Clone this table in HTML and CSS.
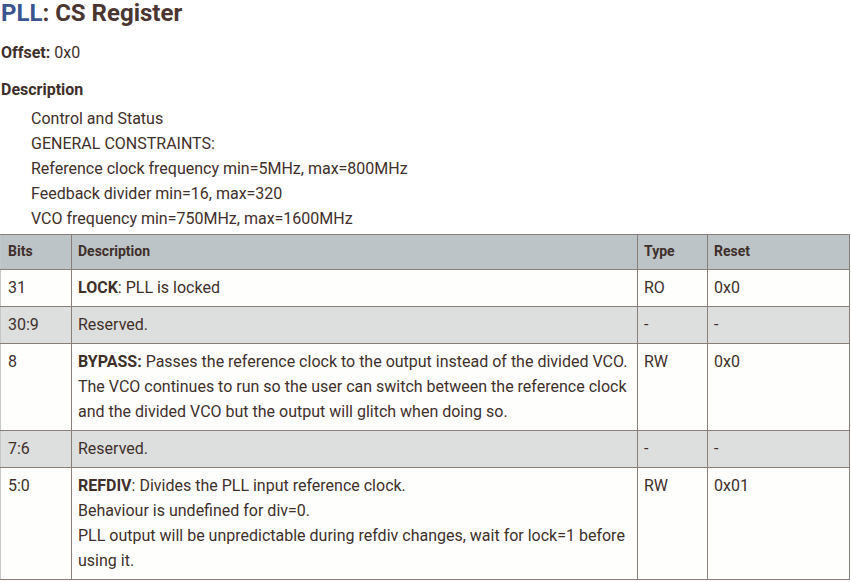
FILE: index.html
```html
<!DOCTYPE html>
<html>
<head>
<meta charset="utf-8">
<link rel="stylesheet" href="styles.css">
</head>
<body>
<div class="page">
  <h1 class="title"><span class="title-block">PLL</span>: CS Register</h1>
  <p class="offset"><b>Offset:</b> 0x0</p>
  <h4 class="desc-head">Description</h4>
  <div class="desc">
    <div>Control and Status</div>
    <div>GENERAL CONSTRAINTS:</div>
    <div>Reference clock frequency min=5MHz, max=800MHz</div>
    <div>Feedback divider min=16, max=320</div>
    <div>VCO frequency min=750MHz, max=1600MHz</div>
  </div>
  <table class="regs">
    <colgroup>
      <col class="c-bits"><col class="c-desc"><col class="c-type"><col class="c-reset">
    </colgroup>
    <thead>
      <tr><th>Bits</th><th>Description</th><th>Type</th><th>Reset</th></tr>
    </thead>
    <tbody>
      <tr><td>31</td><td><b>LOCK</b>: PLL is locked</td><td>RO</td><td>0x0</td></tr>
      <tr class="reserved"><td>30:9</td><td>Reserved.</td><td>-</td><td>-</td></tr>
      <tr><td>8</td><td><b>BYPASS:</b> Passes the reference clock to the output instead of the divided VCO. The VCO continues to run so the user can switch between the reference clock and the divided VCO but the output will glitch when doing so.</td><td>RW</td><td>0x0</td></tr>
      <tr class="reserved"><td>7:6</td><td>Reserved.</td><td>-</td><td>-</td></tr>
      <tr><td>5:0</td><td><b>REFDIV</b>: Divides the PLL input reference clock.<br>Behaviour is undefined for div=0.<br>PLL output will be unpredictable during refdiv changes, wait for lock=1 before using it.</td><td>RW</td><td>0x01</td></tr>
    </tbody>
  </table>
</div>
</body>
</html>
```

FILE: styles.css
```css
html, body {
  margin: 0;
  padding: 0;
  background: #ffffff;
}
body {
  font-family: Roboto, "Liberation Sans", sans-serif;
  color: #3f2f2b;
  font-size: 16px;
}
.page {
  padding-left: 1px;
}
.title {
  margin: 0;
  font-size: 24px;
  line-height: 26px;
  font-weight: 700;
  color: #4a3530;
}
.title-block {
  color: #3a5590;
}
.offset {
  margin: 17px 0 0;
  font-size: 16px;
  line-height: 20px;
}
.offset b {
  font-weight: 700;
}
.desc-head {
  margin: 17px 0 0;
  font-size: 16px;
  line-height: 20px;
  font-weight: 700;
}
.desc {
  margin: 6px 0 0;
  padding-left: 30px;
  line-height: 25px;
}
.regs {
  margin-top: 3px;
  width: 850px;
  border-collapse: collapse;
  table-layout: fixed;
  margin-left: -1px;
}
.c-bits { width: 71px; }
.c-type { width: 70px; }
.c-reset { width: 142px; }
.regs th, .regs td {
  border: 1px solid #8a7e78;
  text-align: left;
  vertical-align: top;
  padding: 5px 6px 6px;
  line-height: 25px;
}
.regs tr > :first-child {
  padding-left: 7px;
  border-left-color: #c4c8c8;
}
.regs th {
  background: #bdc4c7;
  font-size: 14px;
  line-height: 23px;
  font-weight: 700;
}
.regs td {
  background: #fefffd;
}
.regs tr.reserved td {
  background: #dcdfdd;
}
```
